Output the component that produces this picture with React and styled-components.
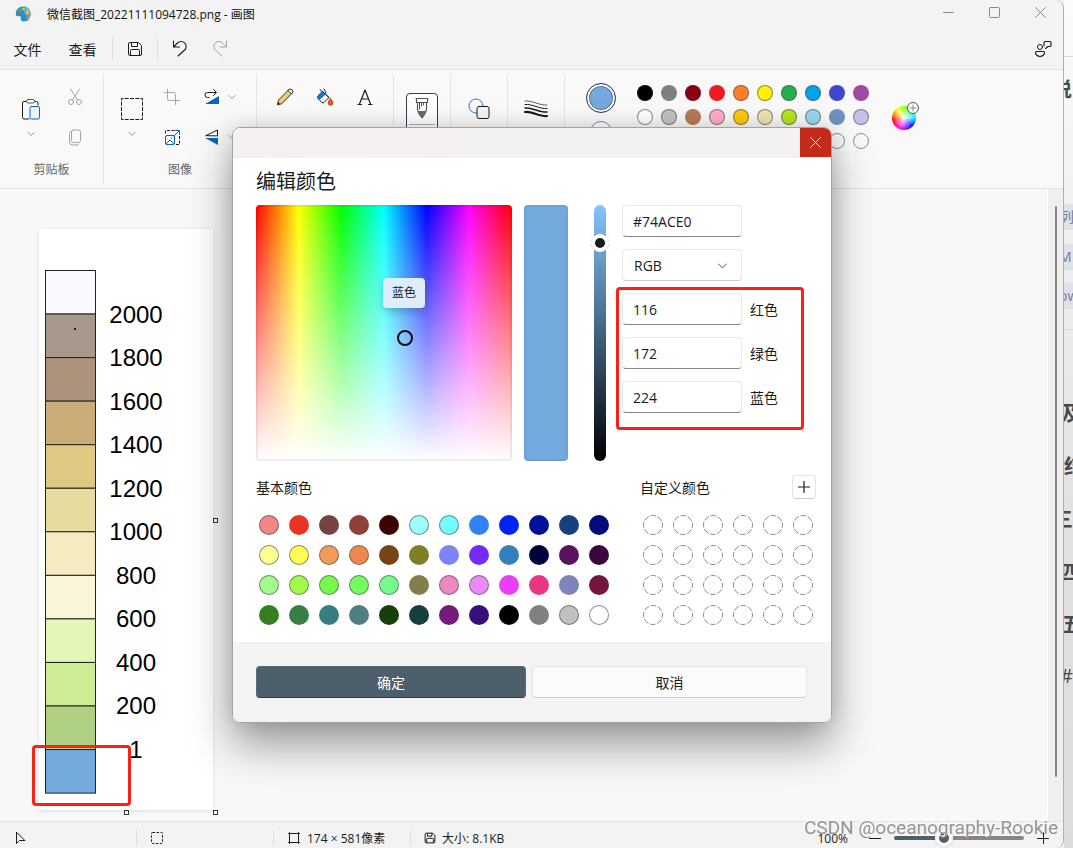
import React, { useState } from 'react';
import styled, { createGlobalStyle, css } from 'styled-components';

const GlobalStyle = createGlobalStyle`
  * {
    box-sizing: border-box;
  }

  body {
    margin: 0;
    color: #1b1b1b;
    background: #f3f3f3;
    font-family: 'Open Sans', 'Noto Sans CJK SC', sans-serif;
    font-size: 12px;
  }

  button,
  input,
  select {
    margin: 0;
    padding: 0;
    border: 0;
    color: inherit;
    background: none;
    font: inherit;
  }
`;

const flexCenter = css`
  display: flex;
  align-items: center;
  justify-content: center;
`;

const Desktop = styled.div`
  position: relative;
  display: grid;
  grid-template-columns: minmax(0, 1fr) 9px;
  min-height: 100vh;
`;

const Window = styled.div`
  display: flex;
  flex-direction: column;
  border-right: 1px solid #b0b0b0;
  border-radius: 0 8px 8px 0;
  background: #f3f3f3;
`;

/* page that shows behind the window's right edge */
const Backdrop = styled.aside`
  overflow: hidden;
  background: linear-gradient(#fbfbfb, #e2e2e2 60%, #dcdcdc);
`;

const BackdropLine = styled.div`
  display: flex;
  align-items: center;
  height: ${({ $height }) => $height}px;
  margin-left: ${({ $shift }) => -$shift}px;
  border-bottom: ${({ $rule }) => ($rule ? '1px solid #dcdcdc' : '0')};
  color: ${({ $tag }) => ($tag ? '#77799c' : '#4a4a4a')};
  font-size: ${({ $tag }) => ($tag ? 14 : 20)}px;
  font-weight: ${({ $tag, $plain }) => ($tag || $plain ? 400 : 700)};

  span {
    padding: 0 4px 0 0;
    line-height: 26px;
    background: ${({ $tag }) => ($tag ? '#dfe2ea' : 'transparent')};
  }
`;

const TitleBar = styled.header`
  display: flex;
  align-items: center;
  height: 28px;
  padding-left: 15px;
`;

const WindowTitle = styled.h1`
  flex: 1;
  margin: 0 0 0 16px;
  color: #111;
  font-size: 12px;
  font-weight: 400;
`;

const CaptionButton = styled.button`
  ${flexCenter};
  align-self: flex-start;
  width: 46px;
  height: 24px;
  color: #8a8a8a;
`;

const MenuBar = styled.nav`
  display: flex;
  align-items: center;
  height: 42px;
  border-bottom: 1px solid #e5e5e5;
`;

const MenuButton = styled.button`
  width: 55px;
  height: 32px;
  font-size: 14px;
`;

const MenuIcon = styled.button`
  ${flexCenter};
  width: 40px;
  height: 32px;
  color: ${({ disabled }) => (disabled ? '#a5a5a5' : '#1b1b1b')};

  &:last-child {
    margin-left: auto;
  }
`;

const MenuRule = styled.span`
  width: 1px;
  height: 24px;
  margin: 0 2px;
  background: #dfdfdf;
`;

const Ribbon = styled.section`
  display: flex;
  height: 119px;
  padding: 4px 0;
  border-bottom: 1px solid #e5e5e5;
  background: #f9f9f9;
`;

const Group = styled.div`
  display: flex;
  flex-direction: column;
  flex: none;
  width: ${({ $width }) => $width}px;
  padding-top: 3px;
  border-right: 1px solid #e5e5e5;
`;

const ToolGrid = styled.div`
  display: grid;
  grid-template-rows: repeat(2, 40px);
  grid-auto-flow: column;
  grid-auto-columns: 40px;
  gap: 0 ${({ $gap }) => $gap || 0}px;
  padding-left: ${({ $inset }) => $inset}px;
`;

const ToolRow = styled(ToolGrid)`
  grid-template-rows: 40px;
`;

const Tool = styled.button`
  ${flexCenter};
  color: ${({ disabled }) => (disabled ? '#a5a5a5' : '#1b1b1b')};
`;

const TallTool = styled.button`
  display: flex;
  flex-direction: column;
  align-items: center;
  justify-content: flex-start;
  gap: 10px;
  grid-row: span 2;
  padding-top: 21px;
`;

const SplitTool = styled.button`
  display: flex;
  align-items: center;
  gap: 6px;
  width: 48px;
  padding-left: 10px;
`;

const GroupLabel = styled.span`
  color: #666;
  line-height: 26px;
  text-align: center;
`;

const WideTool = styled.button`
  display: flex;
  justify-content: center;
  width: 32px;
  height: 64px;
  margin: ${({ $active }) => ($active ? '16px auto 0 12px' : '16px auto 0')};
  padding-top: ${({ $active }) => ($active ? 0 : 1)}px;
  border: ${({ $active }) => ($active ? '1px solid #2f3f4f' : '0')};
  border-radius: 4px;
  background: ${({ $active }) => ($active ? '#fff' : 'none')};
`;

const ColorGroup = styled.div`
  display: flex;
  align-items: flex-start;
  padding: 7px 0 0 21px;
`;

const ActiveColors = styled.div`
  display: flex;
  flex-direction: column;
  align-items: center;
  gap: 8px;
  margin: 2px 17px 0 0;
`;

const CurrentColor = styled.button`
  width: ${({ $small }) => ($small ? 22 : 30)}px;
  height: ${({ $small }) => ($small ? 22 : 30)}px;
  border: 1px solid ${({ $small }) => ($small ? '#8a8a8a' : '#2f3f4f')};
  border-radius: 50%;
  background: ${({ $color }) => $color};
  box-shadow: ${({ $small }) => ($small ? 'none' : 'inset 0 0 0 2px #fff, inset 0 0 0 3px #56789a')};
`;

const Palette = styled.div`
  display: grid;
  grid-template-columns: repeat(${({ $columns }) => $columns}, ${({ $cell }) => $cell}px);
  grid-auto-rows: ${({ $cell }) => $cell}px;
  place-items: center;
`;

const Swatch = styled.button`
  width: ${({ $size }) => $size}px;
  height: ${({ $size }) => $size}px;
  border: 1px solid ${({ $outline }) => ($outline ? 'rgba(70, 70, 70, 0.6)' : 'transparent')};
  border-radius: 50%;
  background: ${({ $color }) => $color} border-box;
`;

const EmptySwatch = styled.button`
  ${flexCenter};
  width: 20px;
  height: 20px;
`;

const WheelButton = styled.button`
  position: relative;
  width: 24px;
  height: 24px;
  margin: 25px 0 0 19px;
  border-radius: 50%;
  background: radial-gradient(circle, #fff, transparent 70%),
    conic-gradient(#8f0, #0f8 50deg, #0ff 85deg, #00f 135deg, #f0f 200deg, #f00 260deg, #f80 290deg, #ff0 325deg, #8f0);

  svg {
    position: absolute;
    top: -4px;
    right: -3px;
  }
`;

const Workspace = styled.main`
  display: flex;
  flex: 1;
  background: #f8f8f8;
`;

const Board = styled.div`
  flex: 1;
  padding: 40px 39px 11px;
`;

const Paper = styled.div`
  position: relative;
  width: 174px;
  height: 581px;
  background: #fff;
  box-shadow: 0 1px 4px rgba(0, 0, 0, 0.1);

  > svg {
    display: block;
  }
`;

const Handle = styled.span`
  position: absolute;
  top: ${({ $top }) => $top};
  left: ${({ $left }) => $left};
  width: 5px;
  height: 5px;
  border: 1px solid #333;
  background: #fff;
`;

const Marker = styled.div`
  position: absolute;
  top: ${({ $top }) => $top}px;
  left: ${({ $left }) => $left}px;
  width: ${({ $width }) => $width}px;
  height: ${({ $height }) => $height}px;
  border: 3px solid #ff2013;
  border-radius: 4px;
  pointer-events: none;
`;

const ScrollTrack = styled.div`
  width: 16px;
  padding: 17px 0 44px 7px;
  border-left: 1px solid #fff;
  background: #efefef;
`;

const ScrollThumb = styled.div`
  width: 2px;
  height: 100%;
  border-radius: 1px;
  background: #858585;
`;

const StatusBar = styled.footer`
  display: flex;
  align-items: center;
  height: 27px;
  padding: 6px 13px 0 0;
  border-top: 1px solid #e5e5e5;
`;

const StatusItem = styled.div`
  display: flex;
  align-items: center;
  gap: 6px;
  width: 137px;
  height: 16px;
  padding-left: 13px;
  border-right: 1px solid ${({ $last }) => ($last ? 'transparent' : '#dfdfdf')};
`;

const Zoom = styled.div`
  display: flex;
  align-items: center;
  gap: 8px;
  margin-left: auto;
`;

const ZoomButton = styled.button`
  ${flexCenter};
  width: 14px;
  height: 18px;
`;

const ZoomSlider = styled.input`
  width: 130px;
  height: 18px;
  margin: 0 4px;
  appearance: none;

  &::-webkit-slider-runnable-track {
    height: 4px;
    border-radius: 2px;
    background: linear-gradient(90deg, #4d5f6b 38%, #868686 38%);
  }

  &::-webkit-slider-thumb {
    width: 18px;
    height: 18px;
    margin-top: -7px;
    border: 4px solid #fff;
    border-radius: 50%;
    background: #4d5f6b;
    box-shadow: 0 0 1px #999;
    appearance: none;
  }
`;

const ZoomValue = styled.label`
  margin-right: 12px;
`;

const Watermark = styled.div`
  position: absolute;
  right: 15px;
  bottom: 8px;
  color: #959595;
  font-family: Roboto, 'Liberation Sans', sans-serif;
  font-size: 19px;
  line-height: 24px;
  text-shadow: -1px -1px 0 #fff;
  pointer-events: none;
`;

const Overlay = styled.div`
  ${flexCenter};
  position: absolute;
  inset: 2px 9px 0 0;
`;

const Dialog = styled.section`
  position: relative;
  width: 600px;
  overflow: hidden;
  border: 1px solid #a3a3a3;
  border-radius: 8px;
  background: #fff;
`;

const DialogShadow = styled.div`
  border-radius: 8px;
  box-shadow: 0 22px 44px rgba(0, 0, 0, 0.38), 0 0 20px rgba(0, 0, 0, 0.12);
`;

const DialogBar = styled.div`
  display: flex;
  justify-content: flex-end;
  height: 30px;
  background: linear-gradient(90deg, #f7efef, #f3f1f3 50%, #f3f1f2);
`;

const CloseButton = styled.button`
  ${flexCenter};
  width: 31px;
  height: 29px;
  color: #fff;
  background: #c42b1c;
`;

const DialogBody = styled.div`
  padding: 0 13px 12px 23px;
`;

const DialogTitle = styled.h2`
  margin: 0;
  font-size: 20px;
  font-weight: 400;
  line-height: 47px;
`;

const Picker = styled.div`
  display: flex;
  align-items: flex-start;
`;

const Spectrum = styled.div`
  position: relative;
  width: 256px;
  height: 256px;
  border-radius: 4px;
  background: linear-gradient(transparent, #fff),
    linear-gradient(90deg, #f00, #ff0, #0f0, #0ff, #00f, #f0f, #f00);
  box-shadow: inset 0 0 0 2px rgba(0, 0, 0, 0.06);
`;

const SpectrumCursor = styled.span`
  position: absolute;
  top: 125px;
  left: 141px;
  width: 16px;
  height: 16px;
  border: 2px solid #111;
  border-radius: 50%;
`;

const Tooltip = styled.span`
  position: absolute;
  top: 73px;
  left: 127px;
  padding: 0 9px;
  border-radius: 4px;
  background: #dfecfb;
  box-shadow: 0 4px 8px rgba(0, 0, 0, 0.2);
  line-height: 30px;
`;

const Preview = styled.div`
  width: 44px;
  height: 256px;
  margin: 0 23px 0 12px;
  border: 2px solid #6ea2d5;
  border-radius: 4px;
  background: #74a9de;
`;

const ValueSlider = styled.input`
  width: 18px;
  height: 256px;
  margin-right: 13px;
  writing-mode: vertical-lr;
  direction: rtl;
  appearance: none;

  &::-webkit-slider-runnable-track {
    width: 12px;
    border-radius: 6px;
    background: linear-gradient(#84c4ff, #000);
  }

  &::-webkit-slider-thumb {
    width: 18px;
    height: 18px;
    margin-left: -3px;
    border: 4px solid #fff;
    border-radius: 50%;
    background: #1b1b1b;
    box-shadow: 0 0 1px #aaa;
    appearance: none;
  }
`;

const Fields = styled.div`
  display: grid;
  gap: 12px;
`;

const Field = styled.div`
  position: relative;
  display: flex;
  align-items: center;
  gap: 8px;
  font-size: 14px;

  > svg {
    position: absolute;
    left: 95px;
    pointer-events: none;
  }
`;

const TextInput = styled.input`
  width: 120px;
  height: 32px;
  padding: 0 10px;
  border: 1px solid #e8e8e8;
  border-bottom-color: #868686;
  border-radius: 4px;
  background: #fff;
`;

const Select = styled.select`
  width: 120px;
  height: 32px;
  padding: 0 11px;
  border: 1px solid #e8e8e8;
  border-bottom-color: #ccc;
  border-radius: 4px;
  background: #fff;
  appearance: none;
`;

const Palettes = styled.div`
  display: flex;
  justify-content: space-between;
  margin-top: 14px;
`;

const PaletteHeader = styled.div`
  display: flex;
  align-items: center;
  justify-content: space-between;
  height: 24px;
  margin-bottom: 11px;

  h3 {
    margin: 0;
    font-size: 14px;
    font-weight: 400;
  }
`;

const PaletteBlock = styled.div`
  ${PaletteHeader} {
    padding-right: ${({ $custom }) => ($custom ? 2 : 0)}px;
  }

  ${Palette} {
    margin-left: -2px;
  }
`;

const AddButton = styled.button`
  ${flexCenter};
  width: 24px;
  height: 24px;
  border: 1px solid #e5e5e5;
  border-bottom-color: #ccc;
  border-radius: 4px;
`;

const DialogFooter = styled.div`
  display: grid;
  grid-template-columns: 270px 1fr;
  gap: 6px;
  padding: 24px 24px 24px 23px;
  background: #f3f3f3;
`;

const DialogButton = styled.button`
  height: 32px;
  border: 1px solid ${({ $primary }) => ($primary ? '#5a6c78' : '#e5e5e5')};
  border-bottom-color: ${({ $primary }) => ($primary ? '#2f3f4a' : '#ccc')};
  border-radius: 4px;
  color: ${({ $primary }) => ($primary ? '#fff' : '#1b1b1b')};
  background: ${({ $primary }) => ($primary ? '#4d5f6b' : '#fbfbfb')};
  font-size: 14px;
`;

const Icon = ({ size = 20, width = size, children, ...rest }) => (
  <svg
    width={width}
    height={size}
    viewBox={`0 0 ${width} ${size}`}
    fill="none"
    stroke="currentColor"
    strokeWidth="1"
    strokeLinecap="round"
    strokeLinejoin="round"
    aria-hidden="true"
    {...rest}
  >
    {children}
  </svg>
);

const Chevron = ({ color = '#999', size = 8 }) => (
  <Icon width={size} size={size} stroke={color}>
    <path d={size > 8 ? 'M1.5 4l4 4 4-4' : 'M1 2.5l3 3 3-3'} />
  </Icon>
);

const Cross = ({ size = 11 }) => (
  <Icon size={size}>
    <path d={`M.5 .5l${size - 1} ${size - 1}M${size - 0.5} .5l-${size - 1} ${size - 1}`} />
  </Icon>
);

const SaveIcon = ({ size = 16 }) => (
  <svg width={size} height={size} viewBox="0 0 16 16" fill="none" stroke="currentColor" strokeWidth={16 / size} aria-hidden="true">
    <path d="M3 1.5h8.5l3 3V13a1.5 1.5 0 0 1-1.5 1.5H3A1.5 1.5 0 0 1 1.5 13V3A1.5 1.5 0 0 1 3 1.5z" />
    <path d="M4.5 1.5v4h6v-4M3.500 14.5V9.5a1 1 0 0 1 1-1h7a1 1 0 0 1 1 1v5" />
  </svg>
);

const AppIcon = () => (
  <Icon size={16} stroke="none">
    <path d="M9 .5C4.500 0 .5 3.500 .8 8c.1 1.800 1.200 2.600 2.700 2.200 1.600-.4 2.500.4 2.300 2-.2 2 .8 3.300 2.800 3.300 4 0 6.900-3.300 6.900-7.500C15.500 4 13 1 9 .5z" fill="#1b93d8" />
    <path d="M9 .5c4 .5 6.500 3.500 6.500 7.500 0 2-.7 3.900-1.900 5.200L9 7z" fill="#35b6f1" />
    <circle cx="3.700" cy="8" r="1.500" fill="#e8512f" />
    <circle cx="4.700" cy="4.500" r="1.500" fill="#5cb531" />
    <circle cx="8.300" cy="3" r="1.600" fill="#f9b51d" />
    <path d="M11 6l1.500-3L14 6l-.7 9h-1.600z" fill="#c4894a" />
    <path d="M11 6l1.500-3.500L14 6v2h-3z" fill="#f5c542" />
  </Icon>
);

const PasteIcon = () => (
  <Icon width={20} size={22}>
    <path d="M5 3.500H3a1.500 1.500 0 0 0-1.500 1.500v14.500A1.500 1.500 0 0 0 3 21h5M14 3.500h1.500A1.500 1.500 0 0 1 17 5v2" />
    <rect x="5.500" y="1.500" width="8" height="3.500" rx="1.700" stroke="#555" />
    <rect x="9" y="8.500" width="9.500" height="12.500" rx="1.500" stroke="#0b62c0" fill="#eef5fc" />
  </Icon>
);

const CutIcon = () => (
  <Icon width={16} size={18}>
    <path d="M3.500 1l7 11M12.500 1l-7 11" />
    <circle cx="4" cy="14" r="2.500" />
    <circle cx="12" cy="14" r="2.500" />
  </Icon>
);

const CopyIcon = () => (
  <Icon width={14} size={17}>
    <rect x="3.500" y="1" width="9" height="12.500" rx="2" />
    <path d="M3 2.500A2 2 0 0 0 1.500 4.500V13a3 3 0 0 0 3 3H9a2 2 0 0 0 1.800-1" />
  </Icon>
);

const SelectIcon = () => (
  <Icon size={22} strokeLinecap="butt">
    <rect x=".5" y=".5" width="21" height="21" strokeDasharray="4 1.250" strokeDashoffset="2" />
  </Icon>
);

const CropIcon = () => (
  <Icon size={16}>
    <path d="M3.500 .5v9a2 2 0 0 0 2 2h10M.5 3.500h9a2 2 0 0 1 2 2v10" />
  </Icon>
);

const ResizeIcon = () => (
  <Icon size={15}>
    <path d="M.5 3.500v-3h9M14.500 6v8.500h-4" strokeDasharray="3 1.500" strokeLinecap="butt" />
    <rect x=".5" y="5.500" width="9" height="9" rx="1.500" stroke="#0b62c0" />
    <path d="M1 14l4-4 4 4M6.500 8h.1M9 6l5-5M10.500 .5h4v4" stroke="#0b62c0" />
  </Icon>
);

const RotateIcon = () => (
  <Icon size={16} width={20}>
    <path d="M11.500 .5l3 3-3 3M14 3.500H5.500a2.500 2.500 0 0 0 0 5H7" />
    <path d="M3 15L17 7v8z" fill="#0b62c0" stroke="none" />
  </Icon>
);

const FlipIcon = () => (
  <Icon size={16} width={20}>
    <path d="M4 6.500L15.500 1v5.500z" />
    <path d="M3 9h13v7z" fill="#0b62c0" stroke="none" />
  </Icon>
);

const PencilIcon = () => (
  <Icon size={18}>
    <path d="M1.500 16.500l1-4.500 10-10a2.200 2.200 0 0 1 3.500 3.300L6 15.500z" fill="#f3c96b" stroke="#333" />
    <path d="M12 2.500l3.500 3.500 1-1.500a2.200 2.200 0 0 0-3-3z" fill="#fff" stroke="#333" />
    <path d="M1.500 16.500l.6-2.500 2 2z" fill="#333" stroke="none" />
  </Icon>
);

const FillIcon = () => (
  <Icon size={18} width={18}>
    <path d="M6.500 3.500L13 9.500l-5 5a1.500 1.500 0 0 1-2 0L1.800 10.300a1.500 1.500 0 0 1 0-2z" fill="#fff" />
    <path d="M6.500 3.500l3 3-6 5.500-1.700-1.700a1.500 1.500 0 0 1 0-2z" fill="#1d74cc" stroke="none" />
    <path d="M4 1.500L6.500 3.500 13 9.500M8 1l2 4" stroke="#222" />
    <path d="M14.500 10.500c1.500 2 2.500 3.200 2.500 4.400a2.400 2.400 0 0 1-4.900 0c0-1.200 1-2.400 2.400-4.400z" fill="#f2581d" stroke="#7a2b12" strokeWidth=".6" />
  </Icon>
);

const TextIcon = () => (
  <Icon size={16}>
    <path d="M2.500 15L8 1l5.500 14M4.500 10h7M1 15.500h3.500M11.500 15.500H15" strokeWidth="1.200" />
  </Icon>
);

const BrushIcon = () => (
  <Icon width={26} size={34} stroke="#555">
    <path d="M7 4.500h12M7.500 4.500v4h11v-4M8.500 9v6c0 3 2 5.500 4.500 8.500 2.500-3 4.500-5.500 4.500-8.500V9" strokeWidth="1.200" />
    <path d="M10.500 9v6M12.500 9v3M14.500 9v2" />
    <path d="M9 17h8c0 3-2 5-4 7.500C11 22 9 20 9 17z" fill="#6b6b6b" stroke="none" />
    <path d="M0 30.500h26" stroke="#aaa" />
  </Icon>
);

const ShapesIcon = () => (
  <Icon size={30} width={22}>
    <circle cx="8" cy="12" r="7" stroke="#2b7cd3" />
    <rect x="9" y="12.500" width="12" height="12" rx="2" fill="#f5f5f5" />
  </Icon>
);

const LinesIcon = () => (
  <Icon size={30} width={24}>
    <path d="M1 7c7-1 15 5 22 4" strokeWidth=".7" />
    <path d="M1 10.500c7-1 15 5 22 4" />
    <path d="M1 14c7-1 15 5 22 4" strokeWidth="1.500" />
    <path d="M1 18c7-1 15 5 22 4" strokeWidth="2.200" />
  </Icon>
);

const UndoIcon = () => (
  <Icon width={16} size={17}>
    <path d="M1.500 1v6h6M1.500 7l4-4a5 5 0 0 1 7.200 7L6 16" strokeWidth="1.100" />
  </Icon>
);

const FeedbackIcon = () => (
  <Icon size={18} stroke="#1b1b1b">
    <circle cx="6" cy="7" r="2.500" />
    <path d="M2.500 11.500h7a1 1 0 0 1 1 1c0 2-2 4-4.500 4s-4.500-2-4.500-4a1 1 0 0 1 1-1zM10 6V2.500a1 1 0 0 1 1-1h5a1 1 0 0 1 1 1v3a1 1 0 0 1-1 1h-2l-2.500 2" strokeWidth="1.100" />
  </Icon>
);

const legendBands = [
  ['#f9f9ff', '2000'],
  ['#a6998b', '1800'],
  ['#ac937b', '1600'],
  ['#caad78', '1400'],
  ['#dfc881', '1200'],
  ['#e7dc9f', '1000'],
  ['#f4ebc1', '800'],
  ['#faf5d8', '600'],
  ['#e3f6b8', '400'],
  ['#cdec93', '200'],
  ['#afd082', '1'],
  ['#74a9de', ''],
];

const BAND = 43.55;

const Legend = () => (
  <svg width="174" height="581" viewBox="0 0 174 581" fontFamily="'Liberation Sans', sans-serif" fontSize="24">
    {legendBands.map(([color, label], i) => (
      <g key={color}>
        <rect x="6.500" y={41.5 + i * BAND} width="50" height={BAND} fill={color} stroke="#222" strokeWidth="1" />
        <text x="97" y={93.5 + i * BAND} textAnchor="middle" fill="#000">
          {label}
        </text>
      </g>
    ))}
    <rect x="35" y="99" width="2" height="2" fill="#222" />
  </svg>
);

const backdropLines = [
  { text: '', height: 57, rule: true },
  { text: '说', height: 66, shift: 12 },
  { text: '', height: 80 },
  { text: '列', height: 28, shift: 4, tag: true },
  { text: '', height: 12 },
  { text: 'M', height: 28, shift: 5, tag: true },
  { text: '', height: 11 },
  { text: 'ow', height: 28, shift: 5, tag: true },
  { text: '', height: 20, rule: true },
  { text: '', height: 57 },
  { text: '及', height: 53, shift: 3 },
  { text: '结', height: 53 },
  { text: '三', height: 53, shift: 11 },
  { text: '四', height: 53, shift: 4 },
  { text: '五', height: 52, shift: 2 },
  { text: '#', height: 50, shift: 4, plain: true },
];

// [color, needs an outline]
const ribbonColors = [
  ['#000000'],
  ['#7f7f7f'],
  ['#880015'],
  ['#ed1c24'],
  ['#ff7f27', true],
  ['#fff200', true],
  ['#22b14c', true],
  ['#00a2e8', true],
  ['#3f48cc'],
  ['#a349a4'],
  ['#ffffff', true],
  ['#c3c3c3', true],
  ['#b97a57'],
  ['#ffaec9', true],
  ['#ffc90e', true],
  ['#efe4b0', true],
  ['#b5e61d', true],
  ['#99d9ea', true],
  ['#7092be'],
  ['#c8bfe7', true],
  ...Array(10).fill(['transparent', true]),
];

const basicColors = [
  '#f08784', '#eb3324', '#774342', '#8e403a', '#3a0603', '#9ffcfd',
  '#73fbfd', '#3282f6', '#0023f5', '#00129a', '#16417c', '#000c7b',
  '#fffe91', '#fffd55', '#f09b59', '#f08650', '#784315', '#807f26',
  '#7e84f7', '#732bf5', '#3580bb', '#00023d', '#58135e', '#3a083e',
  '#a1fb8e', '#a1fb4f', '#75f94d', '#75fa61', '#75fa8d', '#817f49',
  '#ef88be', '#ee8af8', '#ea3ff7', '#ea3680', '#7f82bb', '#75163f',
  '#377d22', '#377e47', '#367e7f', '#507f80', '#183e0c', '#173f40',
  '#741b7c', '#39107b', '#000000', '#808080', '#c0c0c0', '#ffffff',
];

const outlined = [0, 5, 6, 12, 13, 14, 15, 24, 25, 26, 27, 28, 30, 31, 46, 47];

const channels = [
  { id: 'red', label: '红色', value: '116' },
  { id: 'green', label: '绿色', value: '172' },
  { id: 'blue', label: '蓝色', value: '224' },
];

const ColorDialog = () => {
  const [hex, setHex] = useState('#74ACE0');
  const [rgb, setRgb] = useState(channels.map(c => c.value));

  return (
    <Overlay>
      <DialogShadow>
        <Dialog role="dialog" aria-labelledby="dialog-title">
          <DialogBar>
            <CloseButton aria-label="关闭">
              <Cross />
            </CloseButton>
          </DialogBar>
          <DialogBody>
            <DialogTitle id="dialog-title">编辑颜色</DialogTitle>
            <Picker>
              <Spectrum>
                <Tooltip role="tooltip">蓝色</Tooltip>
                <SpectrumCursor />
              </Spectrum>
              <Preview />
              <ValueSlider type="range" aria-label="亮度" min="0" max="100" defaultValue="88" />
              <Fields>
                <Field>
                  <TextInput aria-label="十六进制" value={hex} onChange={e => setHex(e.target.value)} />
                </Field>
                <Field>
                  <Select aria-label="颜色模式" defaultValue="RGB">
                    <option>RGB</option>
                    <option>HSV</option>
                  </Select>
                  <Chevron size={11} color="#555" />
                </Field>
                {channels.map(({ id, label }, i) => (
                  <Field key={id}>
                    <TextInput
                      id={id}
                      value={rgb[i]}
                      onChange={e => setRgb(rgb.map((v, n) => (n === i ? e.target.value : v)))}
                    />
                    <label htmlFor={id}>{label}</label>
                  </Field>
                ))}
              </Fields>
            </Picker>
            <Palettes>
              <PaletteBlock>
                <PaletteHeader>
                  <h3>基本颜色</h3>
                </PaletteHeader>
                <Palette $columns={12} $cell={30}>
                  {basicColors.map((color, i) => (
                    <Swatch key={color} aria-label={color} $size={20} $color={color} $outline={outlined.includes(i)} />
                  ))}
                </Palette>
              </PaletteBlock>
              <PaletteBlock $custom>
                <PaletteHeader>
                  <h3>自定义颜色</h3>
                  <AddButton aria-label="添加">
                    <Icon size={12}>
                      <path d="M6 .5v11M.5 6h11" strokeWidth="1.200" />
                    </Icon>
                  </AddButton>
                </PaletteHeader>
                <Palette $columns={6} $cell={30}>
                  {Array.from({ length: 24 }, (_, i) => (
                    <EmptySwatch key={i} aria-label={`自定义 ${i + 1}`}>
                      <Icon size={20} stroke="#8c8c8c" strokeLinecap="butt">
                        <circle cx="10" cy="10" r="9.500" strokeDasharray="5.860 1.600" strokeDashoffset="2.900" />
                      </Icon>
                    </EmptySwatch>
                  ))}
                </Palette>
              </PaletteBlock>
            </Palettes>
          </DialogBody>
          <DialogFooter>
            <DialogButton $primary>确定</DialogButton>
            <DialogButton>取消</DialogButton>
          </DialogFooter>
          <Marker $top={159} $left={383} $width={188} $height={143} />
        </Dialog>
      </DialogShadow>
    </Overlay>
  );
};

const PaintRibbon = () => (
  <Ribbon>
    <Group $width={104}>
      <ToolGrid $inset={11} $gap={4}>
        <TallTool aria-label="粘贴">
          <PasteIcon />
          <Chevron />
        </TallTool>
        <Tool disabled aria-label="剪切">
          <CutIcon />
        </Tool>
        <Tool disabled aria-label="复制">
          <CopyIcon />
        </Tool>
      </ToolGrid>
      <GroupLabel>剪贴板</GroupLabel>
    </Group>
    <Group $width={153}>
      <ToolGrid $inset={8}>
        <TallTool aria-label="选择">
          <SelectIcon />
          <Chevron />
        </TallTool>
        <Tool disabled aria-label="裁剪">
          <CropIcon />
        </Tool>
        <Tool aria-label="重设大小">
          <ResizeIcon />
        </Tool>
        <SplitTool aria-label="旋转">
          <RotateIcon />
          <Chevron />
        </SplitTool>
        <SplitTool aria-label="翻转">
          <FlipIcon />
          <Chevron />
        </SplitTool>
      </ToolGrid>
      <GroupLabel>图像</GroupLabel>
    </Group>
    <Group $width={137}>
      <ToolRow $inset={8}>
        <Tool aria-label="铅笔">
          <PencilIcon />
        </Tool>
        <Tool aria-label="填充">
          <FillIcon />
        </Tool>
        <Tool aria-label="文本">
          <TextIcon />
        </Tool>
      </ToolRow>
    </Group>
    <Group $width={57}>
      <WideTool $active aria-label="画笔">
        <BrushIcon />
      </WideTool>
    </Group>
    <Group $width={57}>
      <WideTool aria-label="形状">
        <ShapesIcon />
      </WideTool>
    </Group>
    <Group $width={57}>
      <WideTool aria-label="粗细">
        <LinesIcon />
      </WideTool>
    </Group>
    <ColorGroup>
      <ActiveColors>
        <CurrentColor aria-label="颜色 1" $color="#74a9de" />
        <CurrentColor aria-label="颜色 2" $small $color="#fff" />
      </ActiveColors>
      <Palette $columns={10} $cell={24}>
        {ribbonColors.map(([color, outline], i) => (
          <Swatch key={i} aria-label={color} $size={16} $color={color} $outline={outline} />
        ))}
      </Palette>
      <WheelButton aria-label="编辑颜色">
        <Icon size={12} stroke="#555">
          <circle cx="6" cy="6" r="5.500" fill="#fff" />
          <path d="M6 3v6M3 6h6" stroke="#888" />
        </Icon>
      </WheelButton>
    </ColorGroup>
  </Ribbon>
);

const App = () => (
  <>
    <GlobalStyle />
    <Desktop>
      <Window>
        <TitleBar>
          <AppIcon />
          <WindowTitle>微信截图_20221111094728.png - 画图</WindowTitle>
          <CaptionButton aria-label="最小化">
            <Icon size={11}>
              <path d="M.5 5.500h10" />
            </Icon>
          </CaptionButton>
          <CaptionButton aria-label="最大化">
            <Icon size={11}>
              <rect x=".5" y=".5" width="10" height="10" rx="1" />
            </Icon>
          </CaptionButton>
          <CaptionButton aria-label="关闭窗口">
            <Cross />
          </CaptionButton>
        </TitleBar>
        <MenuBar>
          <MenuButton>文件</MenuButton>
          <MenuButton>查看</MenuButton>
          <MenuRule />
          <MenuIcon aria-label="保存">
            <SaveIcon />
          </MenuIcon>
          <MenuRule />
          <MenuIcon aria-label="撤消">
            <UndoIcon />
          </MenuIcon>
          <MenuIcon disabled aria-label="重做">
            <Icon width={16} size={17}>
              <path d="M14.500 1v6h-6M14.500 7l-4-4a5 5 0 0 0-7.200 7L10 16" />
            </Icon>
          </MenuIcon>
          <MenuIcon aria-label="反馈">
            <FeedbackIcon />
          </MenuIcon>
        </MenuBar>
        <PaintRibbon />
        <Workspace>
          <Board>
            <Paper>
              <Legend />
              <Handle $top="289px" $left="100%" />
              <Handle $top="100%" $left="85px" />
              <Handle $top="100%" $left="100%" />
              <Marker $top={516} $left={-7} $width={99} $height={61} />
            </Paper>
          </Board>
          <ScrollTrack>
            <ScrollThumb />
          </ScrollTrack>
        </Workspace>
        <StatusBar>
          <StatusItem>
            <Icon size={14}>
              <path d="M3.500 1.500v11l3-3h5z" />
            </Icon>
          </StatusItem>
          <StatusItem>
            <Icon size={14} strokeLinecap="butt">
              <rect x="1.500" y="1.500" width="11" height="11" rx="1" strokeDasharray="2.500 1.500" />
            </Icon>
          </StatusItem>
          <StatusItem>
            <Icon size={14}>
              <path d="M2.500 1.500v11M11.500 1.500v11M1.500 2.500h11M1.500 11.500h11" />
            </Icon>
            174 × 581像素
          </StatusItem>
          <StatusItem $last>
            <SaveIcon size={12} />
            大小: 8.1KB
          </StatusItem>
          <Zoom>
            <ZoomValue htmlFor="zoom">100%</ZoomValue>
            <ZoomButton aria-label="缩小">
              <Icon size={12}>
                <path d="M.5 6.500h11" />
              </Icon>
            </ZoomButton>
            <ZoomSlider id="zoom" type="range" min="0" max="100" defaultValue="37" />
            <ZoomButton aria-label="放大">
              <Icon size={12}>
                <path d="M6.500 .5v11M.5 6.500h11" />
              </Icon>
            </ZoomButton>
          </Zoom>
        </StatusBar>
      </Window>
      <Backdrop aria-hidden="true">
        {backdropLines.map(({ text, height, shift = 0, rule, tag, plain }, i) => (
          <BackdropLine key={i} $height={height} $shift={shift} $rule={rule} $tag={tag} $plain={plain}>
            {text && <span>{text}</span>}
          </BackdropLine>
        ))}
      </Backdrop>
      <ColorDialog />
      <Watermark>CSDN @oceanography-Rookie</Watermark>
    </Desktop>
  </>
);

export default App;
